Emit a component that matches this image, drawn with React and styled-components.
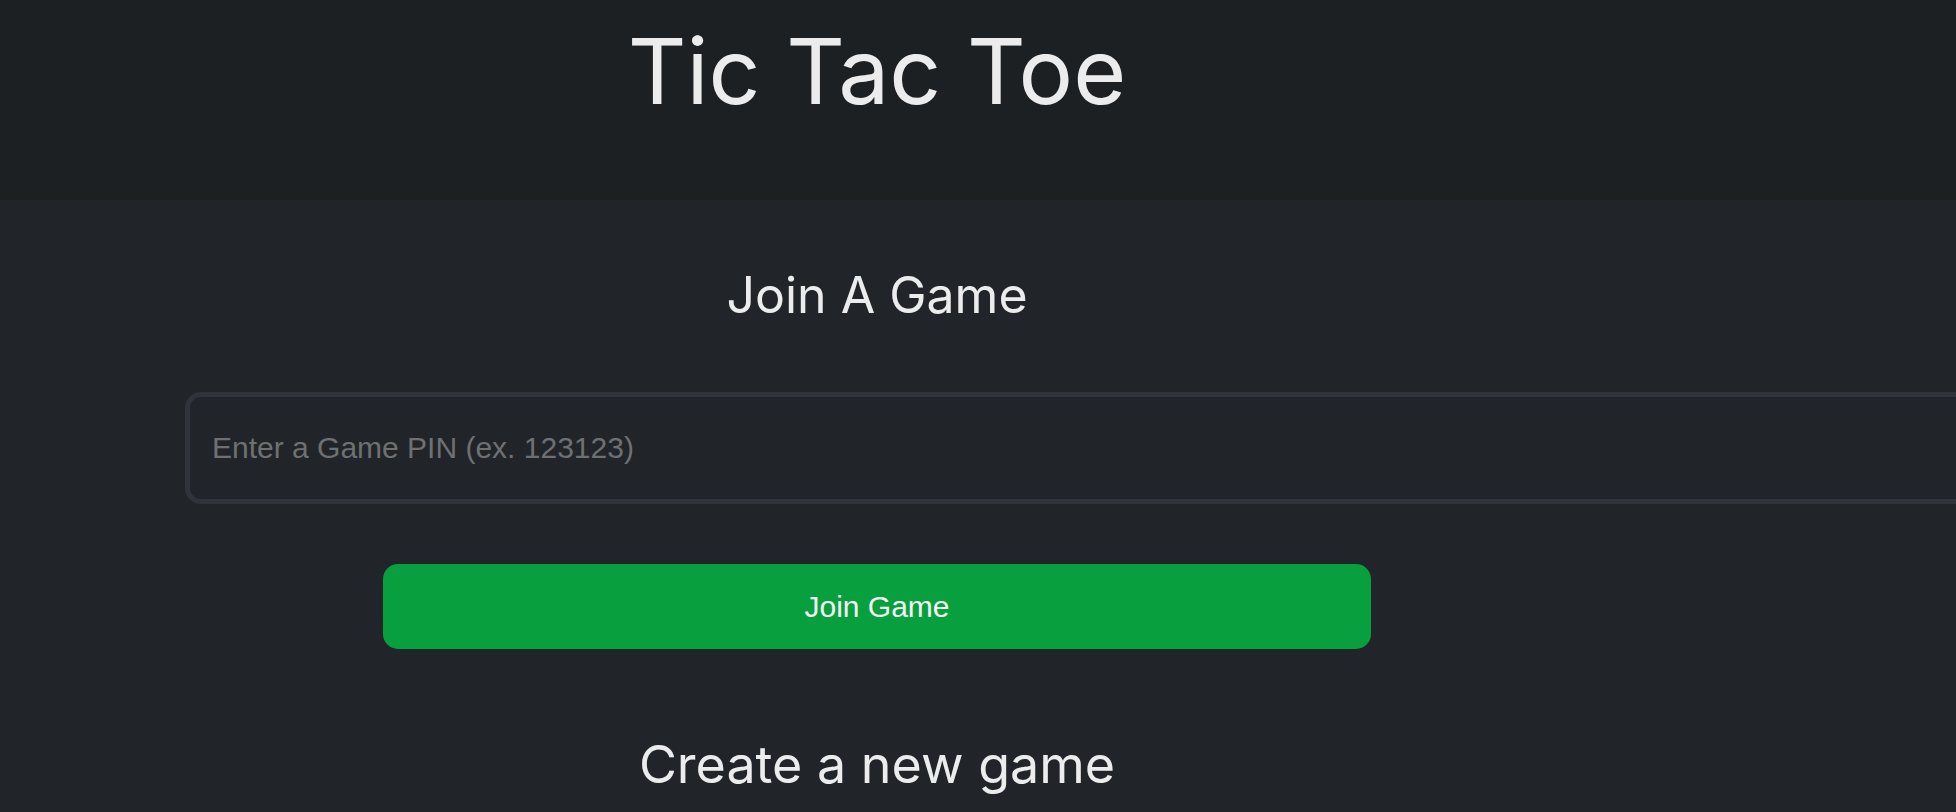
import React from 'react';
import styled, { createGlobalStyle } from 'styled-components';

const Global = createGlobalStyle`
    html, body {
        margin: 0;
        padding: 0;
        background: #212529;
        overflow: hidden;
    }
    #root {
        min-height: 812px;
    }
`

const Header = styled.header`
    height: 200px;
    background: #1c2023;
`

const Column = styled.div`
    width: 1754px;
    display: flex;
    flex-direction: column;
    align-items: center;
`

const HeaderInner = styled(Column)`
    padding-top: 26px;
`

const Title = styled.h1`
    margin: 0;
    font-family: Inter, "Noto Sans", sans-serif;
    font-weight: 400;
    font-size: 91px;
    line-height: 1;
    color: #ececec;
`

const Main = styled(Column)`
    padding-top: 70px;
`

const Heading = styled.h2`
    margin: ${p => p.$top || 0}px 0 0 0;
    font-family: Inter, "Noto Sans", sans-serif;
    font-weight: 400;
    font-size: ${p => p.$size || 50}px;
    line-height: 1;
    color: #ececec;
`

const PinInput = styled.input`
    align-self: flex-start;
    margin: 72px 0 0 185px;
    width: 1900px;
    height: 112px;
    box-sizing: border-box;
    border: 5px solid #2f333b;
    border-radius: 16px;
    background: #212529;
    padding: 0 22px;
    font-family: "Liberation Sans", Arial, sans-serif;
    font-size: 30px;
    color: #ddd;
    outline: none;
    &::placeholder {
        color: #6f7072;
    }
`

const JoinButton = styled.button`
    margin-top: 60px;
    width: 988px;
    height: 85px;
    border: none;
    border-radius: 15px;
    background: #08a03e;
    color: #f4f4f4;
    font-family: "Liberation Sans", Arial, sans-serif;
    font-size: 30px;
    cursor: pointer;
`

export default function App() {
    return (
        <>
            <Global />
            <Header>
                <HeaderInner>
                    <Title>Tic Tac Toe</Title>
                </HeaderInner>
            </Header>
            <Main>
                <Heading>Join A Game</Heading>
                <PinInput placeholder="Enter a Game PIN (ex. 123123)" />
                <JoinButton>Join Game</JoinButton>
                <Heading $top={90} $size={52}>Create a new game</Heading>
            </Main>
        </>
    )
}
